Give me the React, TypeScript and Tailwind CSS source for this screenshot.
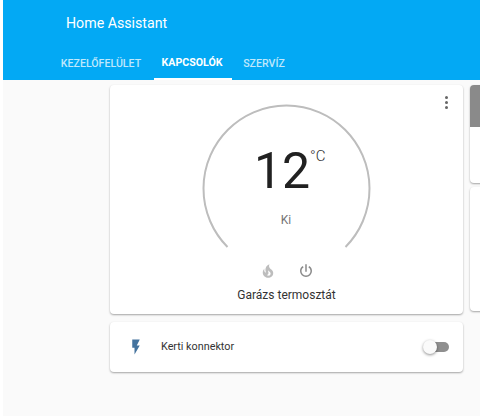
const FONT = { fontFamily: "Roboto, sans-serif" };
const SHADOW = "shadow-[0_1px_2px_rgba(0,0,0,0.35)]";

function Thermostat() {
  return (
    <div className="relative h-[229px] rounded-sm bg-white shadow-[0_1px_2px_rgba(0,0,0,0.35)]">
      <button className="absolute right-[15px] top-[11px] flex flex-col gap-[2px]">
        <span className="h-[3px] w-[3px] rounded-full bg-[#666]" />
        <span className="h-[3px] w-[3px] rounded-full bg-[#666]" />
        <span className="h-[3px] w-[3px] rounded-full bg-[#666]" />
      </button>
      <div className="flex flex-col items-center">
        <div className="relative mt-[11px] h-[152px] w-[170px] translate-x-[-0.5px]">
          <svg width="170" height="152" viewBox="0 0 170 152" className="absolute left-0 top-0">
            <path d="M 26 151 A 83 83 0 1 1 144 151" fill="none" stroke="#bdbdbd" strokeWidth="2" />
          </svg>
          <div className="absolute left-[53px] top-[45px] text-[50px] leading-[60px] font-normal text-[#212121]">12</div>
          <div className="absolute left-[109px] top-[51px] text-[15px] leading-[18px] font-light text-[#333]">°C</div>
          <div className="absolute left-0 right-0 top-[116px] text-center text-[12px] leading-[16px] text-[#757575]">Ki</div>
        </div>
        <div className="mt-[14px] flex items-center gap-[20px]">
          <svg width="18" height="18" viewBox="0 0 24 24" fill="#bdbdbd">
            <path d="M17.66 11.2C17.43 10.9 17.15 10.64 16.89 10.38C16.22 9.78 15.46 9.35 14.82 8.72C13.33 7.26 13 4.85 13.95 3C13 3.23 12.17 3.75 11.46 4.32C8.87 6.4 7.85 10.07 9.07 13.22C9.11 13.32 9.15 13.42 9.15 13.55C9.15 13.77 9 13.97 8.8 14.05C8.57 14.15 8.33 14.09 8.14 13.93C8.08 13.88 8.04 13.83 8 13.76C6.87 12.33 6.69 10.28 7.45 8.64C5.78 10 4.87 12.3 5 14.47C5.06 14.97 5.12 15.47 5.29 15.97C5.43 16.57 5.7 17.17 6 17.7C7.08 19.43 8.95 20.67 10.96 20.92C13.1 21.19 15.39 20.8 17.03 19.32C18.86 17.66 19.5 15 18.56 12.72L18.43 12.46C18.22 12 17.66 11.2 17.66 11.2M14.5 17.5C14.22 17.74 13.76 18 13.4 18.1C12.28 18.5 11.16 17.94 10.5 17.28C11.69 17 12.4 16.12 12.61 15.23C12.78 14.43 12.46 13.77 12.33 13C12.21 12.26 12.23 11.63 12.5 10.94C12.69 11.32 12.89 11.7 13.13 12C13.9 13 15.11 13.44 15.37 14.8C15.41 14.94 15.43 15.08 15.43 15.23C15.46 16.05 15.1 16.95 14.5 17.5H14.5Z" />
          </svg>
          <svg width="18" height="18" viewBox="0 0 24 24" fill="#8a8a8a">
            <path d="M16.56,5.44L15.11,6.89C16.84,7.94 18,9.83 18,12A6,6 0 0,1 12,18A6,6 0 0,1 6,12C6,9.83 7.16,7.94 8.88,6.88L7.44,5.44C5.36,6.88 4,9.28 4,12A8,8 0 0,0 12,20A8,8 0 0,0 20,12C20,9.28 18.64,6.88 16.56,5.44M13,3H11V13H13" />
          </svg>
        </div>
        <div className="mt-[5px] text-[12px] leading-[20px] text-[#333]">Garázs termosztát</div>
      </div>
    </div>
  );
}

function SwitchRow() {
  return (
    <div className="flex h-[50px] items-center rounded-sm bg-white pl-[17px] pr-[14px] shadow-[0_1px_2px_rgba(0,0,0,0.35)]">
      <svg width="18" height="18" viewBox="0 0 24 24" fill="#44739e" className="shrink-0">
        <path d="M7,2V13H10V22L17,10H13L17,2H7Z" />
      </svg>
      <span className="ml-[16px] flex-1 text-[10.8px] leading-[16px] text-[#333]">Kerti konnektor</span>
      <div className="relative h-[10px] w-[24px] rounded-full bg-[#8f8f8f]">
        <span className="absolute left-[-2px] top-[-2px] h-[14px] w-[14px] rounded-full bg-[#fafafa] shadow-[0_1px_3px_rgba(0,0,0,0.45)]" />
      </div>
    </div>
  );
}

export default function App() {
  return (
    <div className="h-[416px] w-[480px] overflow-hidden bg-white pl-[3px]" style={FONT}>
      <div className="flex h-[80px] flex-col bg-[#03a9f4] text-white">
        <div className="flex h-[47px] items-center pl-[63px] text-[14.2px]">Home Assistant</div>
        <div className="flex h-[33px] pl-[46px] text-[10.6px] font-medium">
          <div className="flex w-[104px] items-center justify-center text-white/75">KEZELŐFELÜLET</div>
          <div className="ml-[1px] flex w-[78px] items-center justify-center border-b-2 border-white pr-[2px] font-bold">KAPCSOLÓK</div>
          <div className="flex w-[64px] items-center justify-center text-white/75">SZERVÍZ</div>
        </div>
      </div>
      <div className="flex h-[336px] gap-[7px] bg-[#fafafa] pl-[107px] pt-[5px]">
        <div className="flex w-[353px] shrink-0 flex-col gap-[8px]">
          <Thermostat />
          <SwitchRow />
        </div>
        <div className="flex w-[40px] shrink-0 flex-col gap-[4px]">
          <div className={`h-[98px] rounded-sm bg-white ${SHADOW}`}>
            <div className="h-[42px] rounded-t-sm bg-[#8a8a8a]" />
          </div>
          <div className={`h-[124px] rounded-sm bg-white ${SHADOW}`} />
        </div>
      </div>
    </div>
  );
}
